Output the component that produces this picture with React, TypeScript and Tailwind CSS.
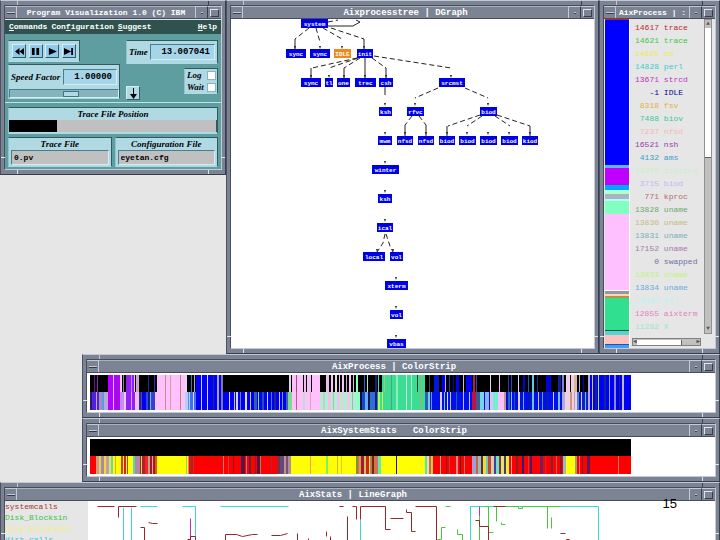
import type { ReactNode } from 'react';
import { clsx } from 'clsx';

type Bar = [x: number, width: number, color: string];

interface WindowProps {
  title: string;
  className?: string;
  small?: boolean;
  children: ReactNode;
}

function Window({ title, className, small, children }: WindowProps) {
  return (
    <section
      className={clsx(
        'relative flex flex-col border border-t-[#c3cad6] border-l-[#4a5162] border-r-[#363d4c] border-b-[#363d4c] bg-[#7c8494] px-[3px] py-1',
        className,
      )}
    >
      <span className="absolute top-0 left-4 h-1 w-px bg-[#c3cad6]" />
      <span className="absolute top-0 right-4 h-1 w-px bg-[#363d4c]" />
      <span className="absolute bottom-0 left-4 h-1 w-px bg-[#dfe4ec]" />
      <span className="absolute right-4 bottom-0 h-1 w-px bg-[#dfe4ec]" />
      <span className="absolute bottom-4 left-0 h-px w-1 bg-[#dfe4ec]" />
      <span className="absolute right-0 bottom-4 h-px w-1 bg-[#dfe4ec]" />
      <div className="flex grow flex-col border border-t-[#464d5c] border-l-[#464d5c] border-r-[#c3cad6] border-b-[#c3cad6]">
        <header className="flex h-[13px] shrink-0 border-b border-b-[#464d5c] text-white">
          <button aria-label="Window menu" className="flex w-3 shrink-0 items-center justify-center border-t border-r border-[#c3cad6]">
            <span className="h-[2px] w-2 border-t border-b border-t-[#c3cad6] border-b-[#363d4c]" />
          </button>
          <h2
            className={clsx(
              'min-w-0 flex-1 overflow-hidden border-t border-[#a9b1bf] text-center font-bold whitespace-pre leading-[12px]',
              small ? 'text-[8px]' : 'text-[9px]',
            )}
          >
            {title}
          </h2>
          <button aria-label="Minimize" className="flex w-3 shrink-0 items-center justify-center border-t border-l border-[#c3cad6]">
            <span className="h-[2px] w-[2px] border-t border-[#c3cad6] bg-[#363d4c]" />
          </button>
          <button aria-label="Maximize" className="flex w-[14px] shrink-0 items-center justify-center border-t border-l border-t-[#c3cad6] border-l-[#363d4c]">
            <span className="h-2 w-[9px] border border-t-[#dfe4ec] border-l-[#dfe4ec] border-r-[#363d4c] border-b-[#363d4c]" />
          </button>
        </header>
        {children}
      </div>
    </section>
  );
}

const raised = 'border border-t-[#d2eef4] border-l-[#d2eef4] border-r-[#2c5f6c] border-b-[#2c5f6c]';
const panel = 'border border-t-[#2f5a60] border-l-[#8fc4cc] border-r-[#2f5a60] border-b-[#a9dce4] bg-[#b0d9e4]';
const sunken = 'border border-t-[#46808f] border-l-[#46808f] border-r-[#d2eef4] border-b-[#d2eef4]';
const caption = "font-['Liberation_Serif',serif] text-[9px] font-bold italic leading-[12px] whitespace-nowrap";

const transport = [
  { label: 'Rewind', path: 'M1 5L6 1V9ZM6 5L11 1V9Z' },
  { label: 'Pause', path: 'M2 1H5V9H2ZM7 1H10V9H7Z' },
  { label: 'Play', path: 'M2 1L11 5L2 9Z' },
  { label: 'Step', path: 'M1 1L9 5L1 9ZM9 1H11V9H9Z' },
];

function ControlPanel() {
  return (
    <>
      <nav className="flex h-[15px] shrink-0 items-center gap-1 border-t border-[#dfe4ec] bg-[#2f524f] px-1 text-[8px] font-bold text-white">
        <button><u>C</u>ommands</button>
        <button>Con<u>f</u>iguration</button>
        <button><u>S</u>uggest</button>
        <button className="ml-auto"><u>H</u>elp</button>
      </nav>
      <div className="flex grow flex-col bg-[#5f9ea0] px-[3px] pt-[6px] pb-[2px]">
        <div className="flex items-start justify-between">
          <div className="flex w-[112px] flex-col gap-[2px]">
            <div className={clsx('flex w-[72px] justify-between p-[3px]', panel)}>
              {transport.map((t) => (
                <button key={t.label} aria-label={t.label} className={clsx('flex h-[14px] w-[14px] items-center justify-center bg-[#93c9ea]', raised)}>
                  <svg viewBox="0 0 12 10" className="h-[9px] w-[11px]">
                    <path d={t.path} fill="#000" />
                  </svg>
                </button>
              ))}
            </div>
            <div className={clsx('flex flex-col', panel)}>
              <div className="flex items-center justify-between py-1 pr-[2px] pl-[2px]">
                <label htmlFor="speed" className={caption}>Speed Factor</label>
                <input id="speed" defaultValue="1.00000" className={clsx('h-4 w-[54px] bg-[#a6d5e9] pr-1 text-right text-[9px] font-bold', sunken)} />
              </div>
              <input
                type="range"
                aria-label="Speed"
                defaultValue={58}
                className={clsx(
                  'h-[9px] w-full appearance-none bg-[#87b3bd] [&::-webkit-slider-thumb]:h-[6px] [&::-webkit-slider-thumb]:w-4 [&::-webkit-slider-thumb]:appearance-none [&::-webkit-slider-thumb]:border [&::-webkit-slider-thumb]:border-[#3b7685] [&::-webkit-slider-thumb]:bg-[#b0d9e4]',
                  sunken,
                )}
              />
            </div>
          </div>
          <div className="flex w-[92px] flex-col gap-1">
            <div className={clsx('flex items-center justify-between px-[2px] py-[3px]', panel)}>
              <label htmlFor="time" className={caption}>Time</label>
              <input id="time" defaultValue="13.007041" className={clsx('h-4 w-[65px] bg-[#a6d5e9] pr-1 text-right text-[9px] font-bold', sunken)} />
            </div>
            <div className="flex items-start justify-between">
              <button aria-label="Apply" className={clsx('mt-[18px] flex h-[14px] w-[14px] items-center justify-center bg-[#b0d9e4]', raised)}>
                <svg viewBox="0 0 9 11" className="h-[11px] w-[9px]">
                  <path d="M4 0H5V6H8L4.500 11L1 6H4Z" fill="#000" />
                </svg>
              </button>
              <div className={clsx('flex w-[34px] flex-col', panel)}>
                {['Log', 'Wait'].map((name) => (
                  <label key={name} className={clsx('flex items-center justify-between px-[2px]', caption)}>
                    {name}
                    <input type="checkbox" className="h-[7px] w-[7px] appearance-none bg-white outline outline-[#8ab5c0]" />
                  </label>
                ))}
              </div>
            </div>
          </div>
        </div>
        <hr className="-mx-[3px] mt-[2px] border-[#bfe3e6]" />
        <div className={clsx('mt-1 pb-px', panel)}>
          <p className={clsx('text-center', caption)}>Trace File Position</p>
          <div role="progressbar" aria-label="Trace File Position" aria-valuenow={23} className="h-3 border-r border-[#2f5a60] bg-[#c0c0c0]">
            <div className="h-full w-[23%] bg-black" />
          </div>
        </div>
        <div className="mt-[3px] flex gap-[3px]">
          {[
            { id: 'trace', label: 'Trace File', value: '0.pv' },
            { id: 'config', label: 'Configuration File', value: 'eyetan.cfg' },
          ].map((f) => (
            <div key={f.id} className={clsx('flex min-w-0 flex-1 flex-col px-[2px] pb-px', panel)}>
              <label htmlFor={f.id} className={clsx('text-center', caption)}>{f.label}</label>
              <input id={f.id} defaultValue={f.value} className={clsx('h-[15px] w-full bg-[#c0c0c0] pl-[2px] text-[8px] font-bold', sunken)} />
            </div>
          ))}
        </div>
      </div>
    </>
  );
}

// x, y, width, label
const nodes: [number, number, number, string][] = [
  [301, 19, 27, 'system'],
  [286, 49, 20, 'sync'],
  [310, 49, 20, 'sync'],
  [334, 49, 17, 'IDLE'],
  [357, 49, 16, 'init'],
  [301, 78, 20, 'sync'],
  [325, 78, 8, 'tl'],
  [337, 78, 13, 'one'],
  [355, 78, 21, 'trec'],
  [379, 78, 14, 'csh'],
  [439, 78, 26, 'srcmst'],
  [379, 107, 13, 'ksh'],
  [407, 107, 17, 'rfvc'],
  [480, 107, 17, 'biod'],
  [378, 136, 14, 'mwm'],
  [397, 136, 16, 'nfsd'],
  [418, 136, 16, 'nfsd'],
  [439, 136, 16, 'biod'],
  [459, 136, 17, 'biod'],
  [480, 136, 17, 'biod'],
  [501, 136, 17, 'biod'],
  [522, 136, 16, 'kiod'],
  [372, 165, 27, 'winter'],
  [378, 194, 14, 'ksh'],
  [377, 223, 16, 'ical'],
  [363, 252, 22, 'local'],
  [390, 252, 13, 'vol'],
  [385, 281, 23, 'xterm'],
  [390, 310, 13, 'vol'],
  [387, 339, 19, 'vbas'],
];

const dashedEdges =
  'M309 28L295 39M316 28L320 42M323 28L342 39M331 28L364 39M357 58L312 68M358 58L329 68M360 58L344 68M372 58L386 68M374 56L451 68M438 88L415 98M465 88L488 98M412 116L405 125M419 116L426 125M480 115L448 126M482 116L467 126M497 115L530 126M495 116L510 126M328 22L338 20M385 234L383 243L377 252M386 234L390 246L393 252';
const solidEdges =
  'M295 39V49M364 39V49M311 68V78M344 68V78M365 58V78M386 68V78M385 87V95M405 125V136M426 125V136M447 126V136M530 126V136M328 26H353L360 22L356 20';
const arrowHeads: [number, number][] = [
  [295, 47], [320, 47], [342, 47], [364, 47], [311, 76], [329, 76], [344, 76], [365, 76], [386, 76], [451, 76],
  [385, 104], [415, 104], [488, 104], [385, 133], [405, 133], [426, 133], [447, 133], [467, 133], [488, 133], [509, 133], [530, 133],
  [385, 162], [385, 191], [385, 220], [377, 250], [393, 250], [396, 278], [396, 307], [396, 336],
];

function ProcessTree() {
  return (
    <svg viewBox="231 19 362 329" preserveAspectRatio="xMinYMin meet" className="h-[329px] w-full bg-white">
      <path d={dashedEdges} fill="none" stroke="#222" strokeDasharray="5 3" />
      <path d={solidEdges} fill="none" stroke="#222" />
      {arrowHeads.map(([x, y], i) => (
        <path key={i} d={`M${x - 1} ${y - 1}H${x + 1}L${x} ${y + 2}Z`} fill="#222" />
      ))}
      {nodes.map(([x, y, w, label], i) => (
        <g key={i}>
          <rect x={x} y={y} width={w} height="9" fill={label === 'IDLE' ? '#ee8a1c' : '#0000e4'} />
          <text x={x + w / 2} y={y + 7} textAnchor="middle" fontSize="6" fontWeight="bold" fill="#fff">
            {label}
          </text>
        </g>
      ))}
    </svg>
  );
}

// heights are proportional shares of the column
const shares: [number, string][] = [
  [1, '#c02030'], [145, '#0000ff'], [3, '#60b8f0'], [17, '#c000ff'], [5, '#00a8f8'], [4, '#b0ffd0'], [5, '#a8b4c0'],
  [2, '#b0ffff'], [13, '#80ffc0'], [76, '#ffc0ff'], [1, '#ffffff'], [3, '#9098b0'], [2, '#f8d8b0'], [2, '#c09040'],
  [32, '#30e090'], [1, '#205040'], [4, '#50d8d0'], [9, '#ffc0c0'], [1, '#2050c0'], [3, '#40a0f0'],
];

const processes: [string, string, string][] = [
  ['14617', 'trace', '#b82c2c'],
  ['14621', 'trace', '#3cc83c'],
  ['14825', 'dd', '#ecec50'],
  ['14828', 'perl', '#38ccd4'],
  ['13671', 'strcd', '#c030c0'],
  ['-1', 'IDLE', '#000090'],
  ['8318', 'fsv', '#e0b040'],
  ['7488', 'biov', '#38c898'],
  ['7237', 'nfsd', '#f4b8b8'],
  ['16521', 'nsh', '#9838b0'],
  ['4132', 'ams', '#38a0c8'],
  ['13370', 'aixterm', '#c8f0c8'],
  ['3715', 'biod', '#bcbcf0'],
  ['771', 'kproc', '#b46c6c'],
  ['13828', 'uname', '#6ca86c'],
  ['13830', 'uname', '#c4bc80'],
  ['13831', 'uname', '#78b0b8'],
  ['17152', 'uname', '#a878b0'],
  ['0', 'swapped', '#7070a8'],
  ['13833', 'uname', '#bcf47c'],
  ['13834', 'uname', '#68acdc'],
  ['13835', 'aix', '#b8f4f4'],
  ['12855', 'aixterm', '#e480bc'],
  ['11282', 'X', '#a0e4c8'],
];

function ProcessList() {
  return (
    <div className="flex min-h-[329px] grow bg-[#e6e6e6]">
      <div className="ml-px flex w-[25px] shrink-0 flex-col border-r border-white">
        {shares.map(([size, color], i) => (
          <div key={i} style={{ flexGrow: size, backgroundColor: color }} />
        ))}
      </div>
      <div className="flex min-w-0 flex-1 flex-col">
        <div className="flex flex-1">
          <ul className="min-w-0 flex-1 overflow-hidden pt-[2px] pl-[5px] text-[8px] leading-[13px]">
            {processes.map(([pid, name, color]) => (
              <li key={pid} className="whitespace-pre" style={{ color }}>
                {pid.padStart(5)} {name}
              </li>
            ))}
          </ul>
          <div className="mr-[3px] flex w-2 flex-col items-center border border-[#909090] bg-[#c0c0c0]">
            <span className="text-[6px] leading-[8px] text-[#555]">▲</span>
            <span className="h-[130px] w-full border-b border-[#606060] bg-white" />
            <span className="mt-auto text-[6px] leading-[8px] text-[#555]">▼</span>
          </div>
        </div>
        <div className="mt-1 mr-[14px] mb-[2px] ml-[2px] flex h-2 items-center border border-[#808080] bg-[#c0c0c0] text-[6px] leading-[6px] text-[#555]">
          <span>◀</span>
          <span className="h-[5px] w-[45px] border-r border-[#606060] bg-white" />
          <span className="ml-auto">▶</span>
        </div>
      </div>
    </div>
  );
}

const processTop: Bar[] = [
  [4, 1, '#5a1880'], [7, 1, '#9020c0'], [18, 14, '#b400ff'], [23, 1, '#e8c0ff'], [26, 1, '#7030a0'], [30, 2, '#f0c8ff'], [33, 1, '#808890'],
  [36, 9, '#9420f0'], [41, 1, '#c080ff'], [44, 1, '#e8c0f0'], [46, 3, '#c8a8c0'], [58, 1, '#203090'], [64, 1, '#2838b0'], [67, 28, '#ffc0fc'],
  [75, 1, '#c09090'], [80, 1, '#d0a0a0'], [90, 1, '#b08888'], [95, 2, '#e0d8ff'], [101, 1, '#3080a0'], [104, 1, '#b0a0f0'], [106, 26, '#0000f4'],
  [111, 1, '#c0d0ff'], [117, 1, '#d8d8ff'], [123, 1, '#203080'], [127, 2, '#a0a0ff'], [131, 2, '#8078a0'], [199, 2, '#e0d8e0'],
  [202, 11, '#ffc0fc'], [206, 1, '#905868'], [214, 2, '#f0c0f0'], [217, 4, '#f8c0f8'], [222, 8, '#ffc0fc'], [236, 3, '#e8c0f0'],
  [241, 2, '#ffc0fc'], [245, 2, '#e8d8e8'], [249, 1, '#f0c0f0'], [252, 2, '#ffc0fc'], [256, 1, '#c0b0c8'], [259, 2, '#ffc0fc'], [263, 1, '#d0c0d0'],
  [266, 2, '#90ffc0'], [274, 1, '#3060d0'], [277, 1, '#a0f0c0'], [285, 2, '#102080'], [288, 1, '#60d0a0'], [292, 43, '#3cdc92'],
  [294, 1, '#b0c080'], [301, 1, '#50a080'], [306, 2, '#80f0c0'], [316, 1, '#c0f0e0'], [321, 1, '#a0f0c8'], [327, 1, '#183828'], [331, 1, '#c0a080'],
  [339, 1, '#484848'], [344, 5, '#0018d8'], [352, 3, '#0000f0'], [355, 1, '#c0b0ff'], [359, 1, '#2040a0'], [363, 1, '#0000c0'], [366, 3, '#0000f4'],
  [373, 1, '#d0b8ff'], [376, 6, '#0000f4'], [383, 2, '#b02040'], [386, 1, '#3050a0'], [400, 1, '#e8d8f0'], [409, 1, '#f0c0f0'], [418, 1, '#2040a0'],
  [421, 1, '#2050c0'], [428, 1, '#e0d0f8'], [433, 2, '#0000e0'], [438, 1, '#2060a0'], [442, 2, '#60c8e0'], [447, 1, '#1030b0'],
  [456, 5, '#0000d8'], [468, 3, '#1020a0'], [472, 2, '#8080e0'], [476, 8, '#f0d0e0'], [480, 1, '#101010'], [484, 3, '#d8b898'], [489, 1, '#c0b0e0'],
  [493, 1, '#0000c0'], [498, 43, '#0000f4'],
];

const processBottom: Bar[] = [
  [0, 2, '#301868'], [2, 7, '#5020e0'], [6, 1, '#c8a0ff'], [9, 3, '#a090c0'], [12, 2, '#6098e0'], [14, 4, '#b8a8d8'], [18, 14, '#b400ff'],
  [23, 1, '#e8c0ff'], [27, 1, '#7030a0'], [30, 4, '#c090f0'], [34, 2, '#f0c8ff'], [36, 9, '#9420f0'], [41, 1, '#d0a0ff'], [45, 4, '#f0c0f0'],
  [49, 2, '#402080'], [51, 14, '#3048d8'], [52, 4, '#0000f0'], [58, 2, '#102090'], [60, 1, '#80b0f0'], [62, 3, '#3040d0'], [65, 30, '#ffc0fc'],
  [75, 1, '#c09090'], [80, 1, '#d0a0a0'], [90, 1, '#b08888'], [95, 5, '#b0d0ff'], [98, 1, '#6090d0'], [100, 6, '#4070f0'], [103, 1, '#e0d0ff'],
  [106, 93, '#0000f4'], [111, 1, '#c0d0ff'], [117, 1, '#d8d8ff'], [123, 1, '#203080'], [127, 2, '#a0a0ff'], [131, 2, '#8078a0'], [139, 1, '#e0d8ff'],
  [144, 1, '#c0c0ff'], [146, 2, '#d8d0ff'], [150, 1, '#6080e0'], [155, 2, '#e0d8ff'], [160, 1, '#c0c0f8'], [164, 3, '#3060a0'], [168, 1, '#80d0f0'],
  [172, 2, '#2050b0'], [177, 1, '#c0e0ff'], [181, 1, '#4080d0'], [184, 2, '#202880'], [189, 1, '#d0c0ff'], [192, 1, '#60a0e0'], [196, 2, '#4060b0'],
  [198, 4, '#80d890'], [202, 28, '#ffc0fc'], [206, 1, '#b06878'], [213, 2, '#b8e0d0'], [220, 1, '#d0a8c8'], [230, 40, '#b0f0d0'], [233, 2, '#d0c8d8'],
  [238, 3, '#f0c0e8'], [243, 1, '#b0b8b8'], [247, 3, '#f0c0f0'], [252, 2, '#d8d8d8'], [257, 3, '#f0c4ec'], [262, 1, '#a0b8b0'], [266, 4, '#90ffc8'],
  [270, 2, '#101040'], [272, 3, '#2040d0'], [275, 3, '#60b0f0'], [278, 2, '#101858'], [280, 8, '#3070d0'], [285, 2, '#102080'], [288, 2, '#b0ff40'],
  [290, 45, '#3cdc92'], [292, 1, '#e0f040'], [301, 1, '#50a080'], [306, 2, '#80f0c0'], [316, 1, '#c0f0e0'], [321, 1, '#a0f0c8'], [331, 1, '#c0a080'],
  [335, 3, '#2860b8'], [338, 2, '#70c8f0'], [340, 135, '#0010e8'], [341, 1, '#60a0d0'], [350, 2, '#d8d0ff'], [354, 1, '#80c0f0'], [357, 1, '#e0d8ff'],
  [360, 1, '#c0c0ff'], [366, 1, '#2060a0'], [373, 1, '#d0b8ff'], [379, 1, '#c0c0ff'], [382, 4, '#c01040'], [386, 4, '#405890'], [390, 4, '#70d8e8'],
  [395, 4, '#90b0f0'], [400, 3, '#d8c8f0'], [403, 5, '#70f0d0'], [408, 7, '#ffc0fc'], [414, 2, '#c89880'], [418, 2, '#3060c0'], [421, 1, '#80d0f0'],
  [424, 1, '#305090'], [428, 2, '#e0d0f8'], [433, 1, '#60b0e0'], [438, 1, '#102060'], [442, 2, '#60c8e0'], [448, 1, '#c0c0ff'], [452, 1, '#50a0e0'],
  [457, 1, '#102880'], [463, 1, '#d0c8ff'], [468, 2, '#70c0e0'], [472, 3, '#b0a8e8'], [475, 12, '#f0d0e0'], [480, 2, '#c89878'], [484, 1, '#b0a0c0'],
  [487, 2, '#5080d0'], [489, 9, '#1020c0'], [491, 1, '#d0c8ff'], [495, 1, '#70c0e0'], [498, 43, '#0000f4'],
];

const blueTail: Bar[] = [
  [498, 2, '#b8a8e8'], [502, 1, '#c8c0f8'], [505, 2, '#102878'], [508, 1, '#a8d8f0'], [514, 2, '#102890'], [519, 1, '#80a8e0'],
  [524, 2, '#8888e8'], [529, 1, '#182868'], [532, 2, '#c0b8e0'],
];

const systemBottom: Bar[] = [
  [0, 6, '#ff0000'], [6, 3, '#c8a080'], [9, 2, '#e0d060'], [11, 3, '#b08898'], [14, 2, '#f0d840'], [16, 3, '#c0a0a8'], [19, 2, '#e8e060'],
  [21, 2, '#60e0a0'], [23, 76, '#ffff00'], [25, 1, '#f0a030'], [31, 2, '#d04020'], [34, 2, '#e02020'], [37, 1, '#905030'], [43, 2, '#60d0c0'],
  [45, 5, '#b088a0'], [50, 5, '#a02828'], [51, 1, '#f0d060'], [55, 3, '#ff2020'], [58, 2, '#c0a090'], [60, 5, '#982020'], [62, 1, '#f0a0a0'],
  [65, 2, '#e05020'], [96, 1, '#80d0a0'], [98, 1, '#e09030'], [99, 88, '#ff0000'], [100, 1, '#804040'], [103, 1, '#a04040'], [133, 1, '#c08080'],
  [138, 1, '#c84040'], [143, 1, '#901818'], [151, 4, '#501848'], [156, 1, '#d07070'], [159, 2, '#702030'], [165, 1, '#902020'], [167, 3, '#501840'],
  [170, 1, '#c07070'], [181, 1, '#a03030'], [187, 14, '#b09098'], [187, 3, '#803040'], [190, 4, '#604880'], [194, 2, '#c09090'], [196, 2, '#805070'],
  [201, 66, '#ffff00'], [220, 1, '#f0a060'], [236, 2, '#80f060'], [247, 1, '#c0c030'], [251, 1, '#f0c040'], [266, 25, '#c87850'], [266, 2, '#908838'],
  [269, 2, '#d0a060'], [271, 3, '#a02020'], [274, 2, '#e8b070'], [276, 3, '#c03010'], [279, 1, '#f0e060'], [282, 2, '#702810'], [285, 2, '#d87050'],
  [288, 3, '#60e8b0'], [291, 44, '#ffff00'], [306, 1, '#202000'], [335, 2, '#60e0b0'], [337, 2, '#e0e0b0'], [339, 2, '#c07040'], [341, 2, '#f0c040'],
  [343, 39, '#ff0000'], [350, 1, '#f0a0a0'], [356, 1, '#802020'], [359, 1, '#c04040'], [366, 2, '#c09090'], [370, 1, '#601818'], [374, 1, '#d07070'],
  [382, 37, '#b0a0a0'], [382, 4, '#a0a0d8'], [386, 2, '#d06040'], [388, 3, '#90c0c0'], [391, 2, '#603030'], [393, 3, '#f0d840'], [396, 2, '#60d0b0'],
  [398, 3, '#d04030'], [401, 3, '#d0d0b0'], [404, 2, '#4040a0'], [406, 3, '#70e0c0'], [409, 2, '#803838'], [411, 3, '#e8e070'], [414, 2, '#404060'],
  [416, 3, '#f0f040'], [419, 56, '#ff0000'], [421, 1, '#f0b0a0'], [426, 2, '#902020'], [432, 2, '#381870'], [438, 1, '#c04040'], [440, 2, '#481870'],
  [450, 3, '#702060'], [455, 1, '#c83030'], [461, 2, '#802040'], [466, 1, '#c06060'], [470, 2, '#901830'], [473, 3, '#90c0b0'], [476, 9, '#ffff00'],
  [485, 2, '#a0a070'], [487, 54, '#ff0000'], [489, 1, '#f08080'], [492, 1, '#802020'], [497, 3, '#601858'], [528, 1, '#f07070'],
];

function ColorStrip({ top = [], bottom, full = [] }: { top?: Bar[]; bottom: Bar[]; full?: Bar[] }) {
  return (
    <div className="flex grow bg-white py-[2px] pl-[3px]">
      <svg viewBox="0 0 625 35" preserveAspectRatio="none" shapeRendering="crispEdges" className="h-[35px] w-full">
        <rect width="541" height="17" />
        {top.map(([x, w, color], i) => (
          <rect key={i} x={x} width={w} height="17" fill={color} />
        ))}
        {bottom.map(([x, w, color], i) => (
          <rect key={i} x={x} y="17" width={w} height="18" fill={color} />
        ))}
        {full.map(([x, w, color], i) => (
          <rect key={i} x={x} width={w} height="35" fill={color} />
        ))}
      </svg>
    </div>
  );
}

const series = [
  {
    color: '#38d8d8',
    path: 'M140 505H157M182 505H195V540M220 505H288M123 506V540M131 506V540M360 518V540M470 540V505H598V540',
  },
  { color: '#c030b0', path: 'M190 517V540M479 505V515' },
  {
    color: '#48c838',
    path: 'M445 505H450M437 538H441V526H445M457 528V533H462V540M479 515V540M484 505H488V540M505 505H518V507H522V505H560M496 505V520M501 521V523H505M547 505V527M551 516V527M488 531H493',
  },
  {
    color: '#982828',
    path: 'M97 505H114M118 516V505H136M140 526H144V540M148 521L152 522H157M187 538H190V535H195V540M225 540V533H236L242 535L252 533H257M271 534H280L287 532M297 532V540M308 537V540M347 515V540M339 505H343M326 530V535M330 535V540M352 505H356V518M360 518V505H385V528H390M390 517H403M406 508V511H411V530H415M415 505H436V540M475 519H479V525H488V540M493 505H505M560 532H565M566 540V538H569',
  },
];

const stats = [
  { name: 'systemcalls', color: '#a83030' },
  { name: 'Disk_Blocksin', color: '#40c040' },
  { name: 'Disk_BlocksOut', color: '#f0f078' },
  { name: 'disk_calls', color: '#38c8d8' },
];

function LineGraph() {
  return (
    <div className="flex min-h-10 grow overflow-hidden bg-white">
      <ul className="w-[83px] shrink-0 bg-[#e6e6e6] text-[8px] leading-[11px]">
        {stats.map((s) => (
          <li key={s.name} style={{ color: s.color }}>{s.name}</li>
        ))}
      </ul>
      <svg viewBox="88 500 627 40" preserveAspectRatio="none" className="h-10 min-w-0 flex-1">
        <g transform="translate(0.5 0.5)" fill="none">
          {series.map((s) => (
            <path key={s.color} d={s.path} stroke={s.color} />
          ))}
        </g>
      </svg>
    </div>
  );
}

export default function App() {
  return (
    <main className="relative h-screen overflow-hidden bg-[#e6e6e6] font-['Liberation_Mono',monospace]">
      <div className="flex items-start">
        <Window title="Program Visualization 1.0 (C) IBM" small className="w-[226px] shrink-0">
          <ControlPanel />
        </Window>
        <Window title="Aixprocesstree | DGraph" className="min-w-0 flex-1">
          <ProcessTree />
        </Window>
        <Window title="AixProcess | :" small className="w-[121px] shrink-0">
          <ProcessList />
        </Window>
      </div>
      <div className="ml-[82px]">
        <Window title="AixProcess | ColorStrip" className="min-h-16">
          <ColorStrip top={processTop} bottom={processBottom} full={blueTail} />
        </Window>
        <Window title="AixSystemStats   ColorStrip" className="min-h-16">
          <ColorStrip bottom={systemBottom} />
        </Window>
      </div>
      <div className="relative">
        <Window title="AixStats | LineGraph">
          <LineGraph />
        </Window>
        <span className="absolute top-[14px] right-[43px] font-['Liberation_Sans',sans-serif] text-[13px] leading-4 text-black">15</span>
      </div>
    </main>
  );
}
